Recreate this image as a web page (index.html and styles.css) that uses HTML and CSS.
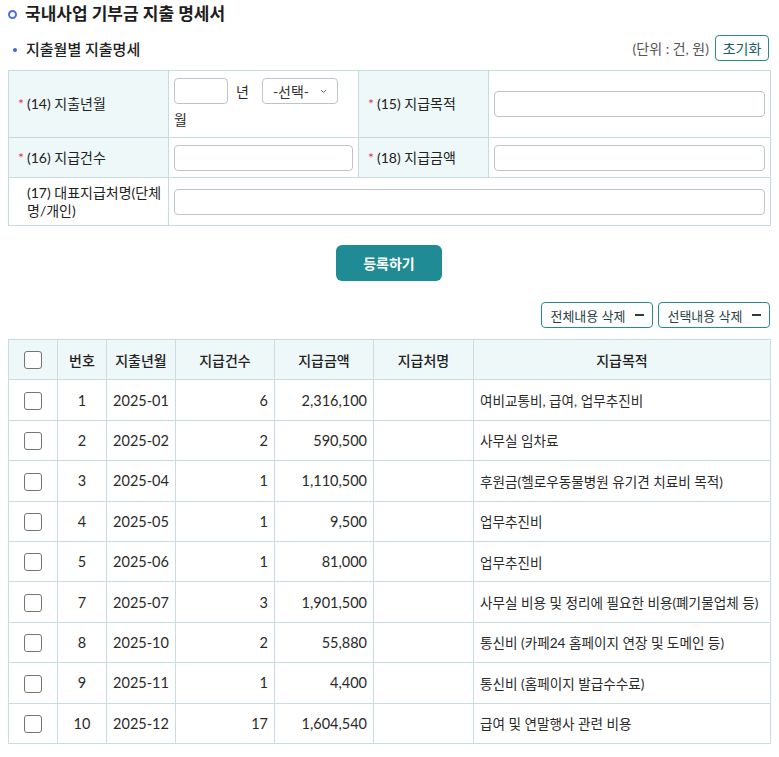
FILE: index.html
```html
<!DOCTYPE html>
<html lang="ko">
<head>
<meta charset="utf-8">
<title>국내사업 기부금 지출 명세서</title>
<link rel="stylesheet" href="styles.css">
</head>
<body>
<div class="page">
  <h1 class="title"><span class="ring"></span>국내사업 기부금 지출 명세서</h1>

  <div class="subbar">
    <h2 class="subtitle"><span class="dot"></span>지출월별 지출명세</h2>
    <div class="subright">
      <span class="unit">(단위 : 건, 원)</span>
      <button class="btn-outline btn-reset" type="button">초기화</button>
    </div>
  </div>

  <table class="form">
    <colgroup>
      <col class="fc1"><col class="fc2"><col class="fc3"><col class="fc4">
    </colgroup>
    <tr class="r1">
      <th class="lbl"><span class="req">*</span>(14) 지출년월</th>
      <td class="fld">
        <div class="ym">
          <input class="inp inp-year" type="text">
          <span class="ym-y">년</span>
          <span class="sel-wrap">
            <select class="sel"><option>-선택-</option></select>
            <svg class="chev" width="7" height="5" viewBox="0 0 7 5"><path d="M1 1l2.5 2.5L6 1" fill="none" stroke="#666" stroke-width="1"/></svg>
          </span>
          <span class="ym-m">월</span>
        </div>
      </td>
      <th class="lbl"><span class="req">*</span>(15) 지급목적</th>
      <td class="fld"><input class="inp inp-full" type="text"></td>
    </tr>
    <tr class="r2">
      <th class="lbl"><span class="req">*</span>(16) 지급건수</th>
      <td class="fld"><input class="inp inp-full" type="text"></td>
      <th class="lbl"><span class="req">*</span>(18) 지급금액</th>
      <td class="fld"><input class="inp inp-full" type="text"></td>
    </tr>
    <tr class="r3">
      <th class="lbl lbl-plain">(17) 대표지급처명(단체명/개인)</th>
      <td class="fld" colspan="3"><input class="inp inp-full" type="text"></td>
    </tr>
  </table>

  <div class="submit-row">
    <button class="btn-primary" type="button">등록하기</button>
  </div>

  <div class="actions">
    <button class="btn-outline btn-del" type="button">전체내용 삭제 <span class="minus"></span></button>
    <button class="btn-outline btn-del" type="button">선택내용 삭제 <span class="minus"></span></button>
  </div>

  <table class="list">
    <colgroup>
      <col class="c1"><col class="c2"><col class="c3"><col class="c4"><col class="c5"><col class="c6"><col class="c7">
    </colgroup>
    <thead>
      <tr>
        <th><input class="chk" type="checkbox"></th>
        <th>번호</th>
        <th>지출년월</th>
        <th>지급건수</th>
        <th>지급금액</th>
        <th>지급처명</th>
        <th>지급목적</th>
      </tr>
    </thead>
    <tbody>
      <tr><td class="ctr"><input class="chk" type="checkbox"></td><td class="ctr num">1</td><td class="ctr num">2025-01</td><td class="rt num">6</td><td class="rt num">2,316,100</td><td></td><td class="lt">여비교통비, 급여, 업무추진비</td></tr>
      <tr><td class="ctr"><input class="chk" type="checkbox"></td><td class="ctr num">2</td><td class="ctr num">2025-02</td><td class="rt num">2</td><td class="rt num">590,500</td><td></td><td class="lt">사무실 임차료</td></tr>
      <tr><td class="ctr"><input class="chk" type="checkbox"></td><td class="ctr num">3</td><td class="ctr num">2025-04</td><td class="rt num">1</td><td class="rt num">1,110,500</td><td></td><td class="lt">후원금(헬로우동물병원 유기견 치료비 목적)</td></tr>
      <tr><td class="ctr"><input class="chk" type="checkbox"></td><td class="ctr num">4</td><td class="ctr num">2025-05</td><td class="rt num">1</td><td class="rt num">9,500</td><td></td><td class="lt">업무추진비</td></tr>
      <tr><td class="ctr"><input class="chk" type="checkbox"></td><td class="ctr num">5</td><td class="ctr num">2025-06</td><td class="rt num">1</td><td class="rt num">81,000</td><td></td><td class="lt">업무추진비</td></tr>
      <tr><td class="ctr"><input class="chk" type="checkbox"></td><td class="ctr num">7</td><td class="ctr num">2025-07</td><td class="rt num">3</td><td class="rt num">1,901,500</td><td></td><td class="lt">사무실 비용 및 정리에 필요한 비용(폐기물업체 등)</td></tr>
      <tr><td class="ctr"><input class="chk" type="checkbox"></td><td class="ctr num">8</td><td class="ctr num">2025-10</td><td class="rt num">2</td><td class="rt num">55,880</td><td></td><td class="lt">통신비 (카페24 홈페이지 연장 및 도메인 등)</td></tr>
      <tr><td class="ctr"><input class="chk" type="checkbox"></td><td class="ctr num">9</td><td class="ctr num">2025-11</td><td class="rt num">1</td><td class="rt num">4,400</td><td></td><td class="lt">통신비 (홈페이지 발급수수료)</td></tr>
      <tr><td class="ctr"><input class="chk" type="checkbox"></td><td class="ctr num">10</td><td class="ctr num">2025-12</td><td class="rt num">17</td><td class="rt num">1,604,540</td><td></td><td class="lt">급여 및 연말행사 관련 비용</td></tr>
    </tbody>
  </table>
</div>
</body>
</html>
```

FILE: styles.css
```css
* { box-sizing: border-box; }
html, body { margin: 0; padding: 0; background: #fff; }
body {
  font-family: Lato, "Noto Sans CJK KR", sans-serif;
  font-size: 14px;
  color: #2a2a2a;
}
.page {
  width: 762px;
  margin: 0 0 0 8px;
  padding-top: 3px;
}

/* Title */
.title {
  display: flex;
  align-items: center;
  margin: 0;
  font-size: 17px;
  font-weight: 700;
  color: #1e1e1e;
  line-height: 22px;
}
.ring {
  width: 9px;
  height: 9px;
  border: 2px solid #4d72d4;
  border-radius: 50%;
  margin-right: 8px;
}

/* Sub bar */
.subbar {
  display: flex;
  justify-content: space-between;
  align-items: center;
  margin-top: 10px;
  height: 26px;
}
.subtitle {
  display: flex;
  align-items: center;
  margin: 0;
  font-size: 15px;
  font-weight: 500;
  color: #222;
}
.dot {
  width: 4px;
  height: 4px;
  border-radius: 50%;
  background: #3c6bd6;
  margin: 3px 9px 0 5px;
}
.subright {
  display: flex;
  align-items: center;
  gap: 6px;
  margin-right: 1px;
}
.unit { color: #555; font-size: 14px; }

.btn-outline {
  font-family: inherit;
  background: #fff;
  border: 1px solid #2a8891;
  border-radius: 4px;
  color: #24535a;
  font-size: 13px;
  height: 26px;
  padding: 0 9px;
  cursor: pointer;
}
.btn-reset { width: 54px; padding: 0; color: #1f5d64; font-size: 14px; }

/* Form table */
.form {
  width: 762px;
  margin-top: 9px;
  border-collapse: collapse;
  table-layout: fixed;
}
.fc1 { width: 160px; }
.fc2 { width: 190px; }
.fc3 { width: 130px; }
.fc4 { width: 282px; }
.form th, .form td {
  border: 1px solid #c7dadd;
  vertical-align: middle;
}
.lbl {
  background: #eef8f8;
  font-weight: 400;
  text-align: left;
  padding: 0 3px 0 18px;
  line-height: 18px;
  color: #222;
}
.lbl-plain { background: #fff; }
.req {
  display: inline-block;
  width: 9px;
  margin-left: -9px;
  color: #e0356b;
  font-size: 14px;
}
.fld { padding: 0 5px; }
.r1 { height: 67px; }
.r2 { height: 40px; }
.r3 { height: 48px; }

.ym {
  display: flex;
  flex-wrap: wrap;
  align-items: center;
  row-gap: 6px;
}
.ym-y { margin: 0 13px 0 8px; }
.ym-m { width: 100%; line-height: 20px; }

.inp {
  height: 26px;
  border: 1px solid #bcc5c9;
  border-radius: 4px;
  background: #fff;
  font-family: inherit;
  font-size: 14px;
  padding: 0 6px;
  display: block;
}
.inp-year { width: 54px; }
.inp-full { width: 100%; }

.sel-wrap { position: relative; display: inline-block; }
.sel {
  appearance: none;
  -webkit-appearance: none;
  width: 76px;
  height: 26px;
  border: 1px solid #bcc5c9;
  border-radius: 4px;
  background: #fff;
  font-family: inherit;
  font-size: 14px;
  color: #333;
  padding: 0 0 0 10px;
  display: block;
}
.chev {
  position: absolute;
  right: 11px;
  top: 11px;
  pointer-events: none;
}

/* Submit */
.submit-row {
  display: flex;
  justify-content: center;
  margin-top: 19px;
}
.btn-primary {
  width: 106px;
  height: 36px;
  border: none;
  border-radius: 6px;
  background: #1f8b95;
  color: #fff;
  font-family: inherit;
  font-size: 14px;
  font-weight: 700;
  cursor: pointer;
}

/* Actions */
.actions {
  display: flex;
  justify-content: flex-end;
  gap: 5px;
  margin-top: 21px;
}
.btn-del {
  width: 112px;
  display: flex;
  align-items: center;
  justify-content: center;
  gap: 9px;
  color: #2a3f44;
  padding: 0;
}
.minus {
  display: inline-block;
  width: 9px;
  height: 2px;
  background: #2a3f44;
}

/* List table */
.list {
  width: 762px;
  margin-top: 11px;
  border-collapse: collapse;
  table-layout: fixed;
}
.c1 { width: 49px; }
.c2 { width: 49px; }
.c3 { width: 69px; }
.c4 { width: 99px; }
.c5 { width: 99px; }
.c6 { width: 100px; }
.c7 { width: 297px; }
.list th, .list td {
  border: 1px solid #c9dde1;
  height: 40.4px;
  padding: 0 6px;
  vertical-align: middle;
}
.list th {
  background: #eef8f8;
  font-weight: 500;
  color: #222;
  text-align: center;
}
.list td { color: #2a2a2a; }
.ctr { text-align: center; }
.rt { text-align: right; }
.list td.lt {
  text-align: left;
  white-space: nowrap;
  overflow: hidden;
  font-size: 13.6px;
  padding: 0 2px 0 6px;
}
.num { font-size: 14.5px; }

.chk {
  appearance: none;
  -webkit-appearance: none;
  width: 18px;
  height: 18px;
  margin: 0;
  border: 1px solid #757575;
  border-radius: 3px;
  background: #fff;
  vertical-align: middle;
  display: inline-block;
}
```
